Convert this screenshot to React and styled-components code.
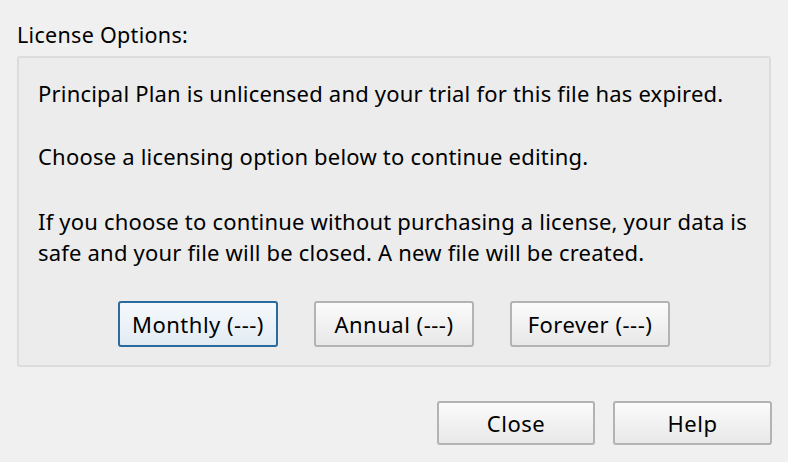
import React from 'react';
import styled, {createGlobalStyle} from 'styled-components';

const GlobalStyle = createGlobalStyle`
    html, body
    {
        margin: 0;
        padding: 0;
        background-color: #f0f0f0;
    }
    body
    {
        font-family: "Noto Sans", "Open Sans", "Liberation Sans", sans-serif;
        color: #000;
    }
`;

const options = ['Monthly', 'Annual', 'Forever'];

function App()
{
    return (
        <>
            <GlobalStyle/>
            <Dialog>
                <Label>License Options:</Label>
                <GroupBox>
                    <Message>Principal Plan is unlicensed and your trial for this file has expired.</Message>
                    <Message $gap={34}>Choose a licensing option below to continue editing.</Message>
                    <Message $gap={33}>
                        If you choose to continue without purchasing a license, your data is<br/>
                        safe and your file will be closed. A new file will be created.
                    </Message>
                    <OptionRow>
                        {options.map((name, i) => (
                            <Button key={name} $focused={i === 0} $w={160} $h={46}>{name} (---)</Button>
                        ))}
                    </OptionRow>
                </GroupBox>
                <Footer>
                    <Button $w={158} $h={44}>Close</Button>
                    <Button $w={159} $h={44}>Help</Button>
                </Footer>
            </Dialog>
        </>
    );
}

const Dialog = styled.div`
    width: 788px;
    height: 462px;
    box-sizing: border-box;
    padding: 20px 16px 0 17px;
    display: flex;
    flex-direction: column;
`;

const Label = styled.div`
    font-size: 21.5px;
    letter-spacing: 0.3px;
    line-height: 30px;
    height: 36px;
    margin-right: 1px;
`;

const GroupBox = styled.div`
    height: 311px;
    box-sizing: border-box;
    margin-right: 1px;
    border: 2px solid #dcdcdc;
    border-radius: 3px;
    background-color: #ececec;
    padding: 20px 0 0 19px;
    display: flex;
    flex-direction: column;
`;

const Message = styled.p`
    margin: 0 0 ${p => p.$gap ?? 32}px 0;
    font-size: 22px;
    letter-spacing: 0.2px;
    line-height: 31px;
    white-space: nowrap;
`;

const OptionRow = styled.div`
    display: flex;
    justify-content: center;
    gap: 36px;
    margin-left: -19px;
`;

const Button = styled.button`
    width: ${p => p.$w}px;
    height: ${p => p.$h}px;
    box-sizing: border-box;
    font-family: inherit;
    font-size: 22px;
    letter-spacing: 0.5px;
    color: #000;
    border-radius: 3px;
    border: ${p => p.$focused ? '2px solid #2b6a9c' : '2px solid #b3b3b3'};
    background: ${p => p.$focused
        ? 'linear-gradient(to bottom, #f6f9fc, #e2ebf3)'
        : 'linear-gradient(to bottom, #fbfbfb, #e8e8e8)'};
    padding: 0;
    cursor: pointer;
`;

const Footer = styled.div`
    display: flex;
    justify-content: flex-end;
    gap: 18px;
    margin-top: 34px;
`;

export default App;
